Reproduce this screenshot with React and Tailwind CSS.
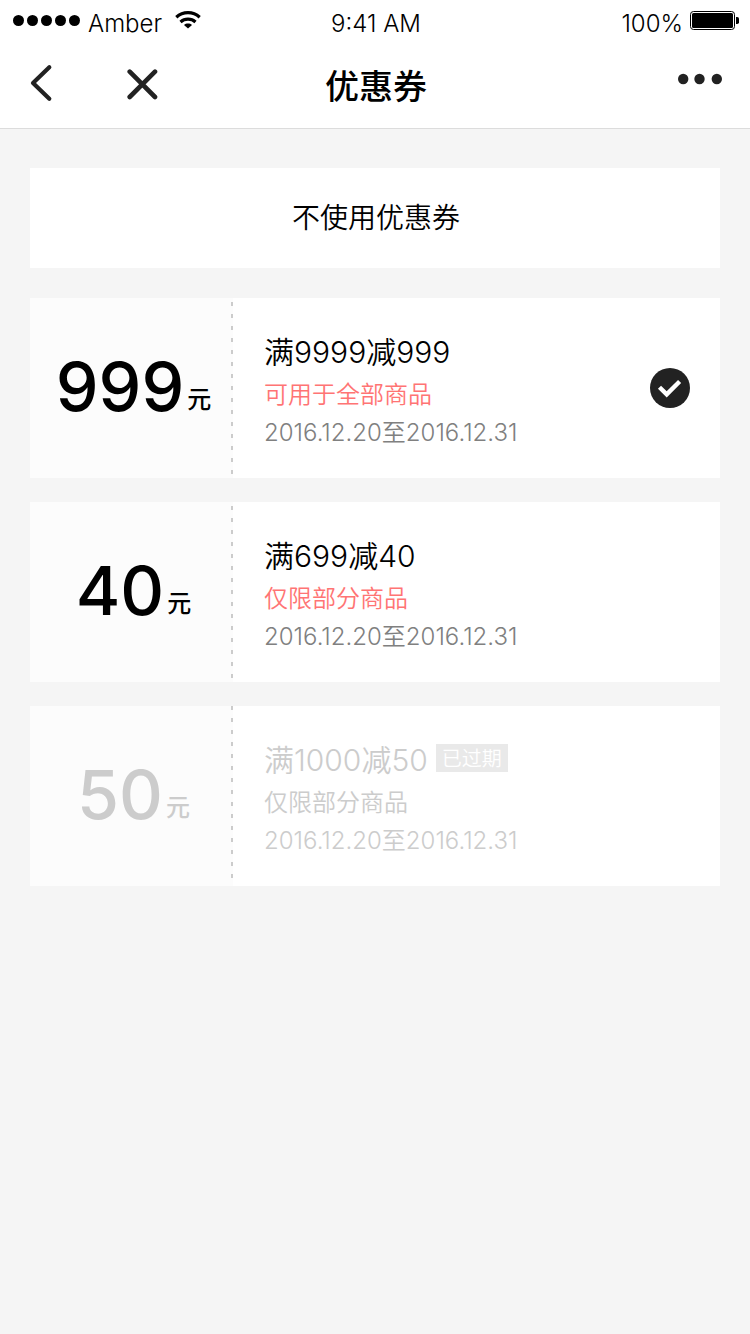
import { useState } from "react";

const coupons = [
  { id: "c999", amount: "999", title: "满9999减999", scope: "可用于全部商品", period: "2016.12.20至2016.12.31" },
  { id: "c40", amount: "40", title: "满699减40", scope: "仅限部分商品", period: "2016.12.20至2016.12.31" },
  { id: "c50", amount: "50", title: "满1000减50", scope: "仅限部分商品", period: "2016.12.20至2016.12.31", expired: true },
];

function StatusBar() {
  return (
    <div className="grid h-10 grid-cols-3 items-center pl-[13px] pr-[11px] text-2xl font-light leading-10">
      <div className="flex items-center">
        <div className="mb-1 flex gap-[3px]">
          {[0, 1, 2, 3, 4].map((dot) => (
            <span key={dot} className="size-[11px] rounded-full bg-black" />
          ))}
        </div>
        <span className="ml-2 pt-1">Amber</span>
        <svg className="mb-1 ml-[13px] h-[18px] w-[26px]" viewBox="0 0 26 18" fill="none" stroke="#000" strokeWidth="3.2" aria-hidden="true">
          <path d="M1.3 6.2C8 .1 18 .1 24.7 6.2" />
          <path d="M5.5 11C9.8 7.2 16.2 7.2 20.5 11" />
          <path d="M13 17.6 9 13.9C11.3 12 14.7 12 17 13.9Z" fill="#000" stroke="none" />
        </svg>
      </div>
      <span className="pt-1 text-center">9:41 AM</span>
      <div className="flex items-center justify-end gap-[7px]">
        <span className="pt-1">100%</span>
        <svg className="mb-1 h-[19px] w-[49px]" viewBox="0 0 49 19" aria-hidden="true">
          <rect x=".5" y=".5" width="44" height="18" rx="3" fill="none" stroke="#000" />
          <rect x="2" y="2" width="41" height="15" rx="1.5" />
          <path d="M46 6h1.2q1.8 0 1.8 1.8v3.4q0 1.8-1.8 1.8H46z" />
        </svg>
      </div>
    </div>
  );
}

function NavBar() {
  return (
    <div className="grid h-[88px] grid-cols-3 items-center px-7">
      <div className="flex items-center gap-[70px]">
        <button type="button" aria-label="返回" className="h-10 w-7">
          <svg className="h-10 w-7" viewBox="0 0 28 40" fill="none" stroke="#222" strokeWidth="4.2" strokeLinecap="round" strokeLinejoin="round">
            <path d="M21.3 3.2 5 19 21.3 34.8" />
          </svg>
        </button>
        <button type="button" aria-label="关闭" className="size-8">
          <svg className="size-8" viewBox="0 0 32 32" fill="none" stroke="#222" strokeWidth="4.6" strokeLinecap="round">
            <path d="M3.7 3.7 29 29M29 3.7 3.7 29" />
          </svg>
        </button>
      </div>
      <h1 className="pl-0.5 pt-1.5 text-center text-[34px] font-medium leading-[50px]">优惠券</h1>
      <button type="button" aria-label="更多" className="mb-2.5 flex h-10 items-center justify-self-end">
        <svg className="h-3 w-11" viewBox="0 0 44 12" fill="#222">
          <circle cx="5.2" cy="6" r="5.2" />
          <circle cx="21.5" cy="6" r="5.2" />
          <circle cx="38.8" cy="6" r="5.2" />
        </svg>
      </button>
    </div>
  );
}

function Coupon({ coupon, checked, onSelect }) {
  const { id, amount, title, scope, period, expired } = coupon;
  return (
    <label htmlFor={id} className={`relative flex h-[180px] bg-white ${expired ? "text-[#ccc]" : "cursor-pointer text-black"}`}>
      <input id={id} type="radio" name="coupon" className="sr-only" checked={checked} disabled={expired} onChange={onSelect} />
      <div className="flex w-[201px] shrink-0 justify-center bg-[#fcfcfc] pl-1.5 pt-[46px]">
        <div className="flex h-[84px] items-end gap-[3px]">
          <span className="text-[68px] font-medium leading-[84px]">{amount}</span>
          <span className="pb-2.5 text-2xl font-medium leading-9">元</span>
        </div>
      </div>
      <div
        className={`w-0.5 shrink-0 ${
          expired
            ? "bg-[repeating-linear-gradient(to_bottom,#ccc_0px,#ccc_4px,#fcfcfc_4px,#fcfcfc_12px)]"
            : "bg-[repeating-linear-gradient(to_bottom,#fcfcfc_0px,#fcfcfc_4px,#ccc_4px,#ccc_8px,#fcfcfc_8px,#fcfcfc_12px)]"
        }`}
      />
      <div className="flex min-w-0 flex-1 flex-col pl-[31px] pt-[33px]">
        <div className="flex items-center gap-2">
          <span className="text-[30px] leading-[42px]">{title}</span>
          {expired && <span className="mb-1 h-7 bg-[#e9e9e9] px-1.5 text-xl leading-[30px] text-white">已过期</span>}
        </div>
        <span className={`text-2xl leading-[44px] ${expired ? "" : "text-[#ff7474]"}`}>{scope}</span>
        <span className={`text-2xl leading-8 ${expired ? "" : "text-[#808080]"}`}>{period}</span>
      </div>
      {checked && (
        <svg className="mr-[30px] size-10 shrink-0 self-center" viewBox="0 0 40 40" aria-hidden="true">
          <circle cx="20" cy="20" r="20" fill="#222" />
          <path d="m9.5 19.2 7.2 7.2L29.6 13.5" fill="none" stroke="#fff" strokeWidth="4.4" />
        </svg>
      )}
    </label>
  );
}

export default function App() {
  const [selected, setSelected] = useState("c999");
  return (
    <div className="min-h-screen bg-[#f5f5f5] font-[Inter,'Noto_Sans_CJK_SC',sans-serif] font-[350] text-black">
      <header className="border-b border-[#dcdcdc] bg-white">
        <StatusBar />
        <NavBar />
      </header>
      <main className="px-[30px] pb-[30px] pt-[39px]">
        <button type="button" onClick={() => setSelected(null)} className="h-[100px] w-full bg-white pl-0.5 text-[28px]">
          不使用优惠券
        </button>
        <div className="mt-[30px] flex flex-col gap-6">
          {coupons.map((coupon) => (
            <Coupon key={coupon.id} coupon={coupon} checked={selected === coupon.id} onSelect={() => setSelected(coupon.id)} />
          ))}
        </div>
      </main>
    </div>
  );
}
